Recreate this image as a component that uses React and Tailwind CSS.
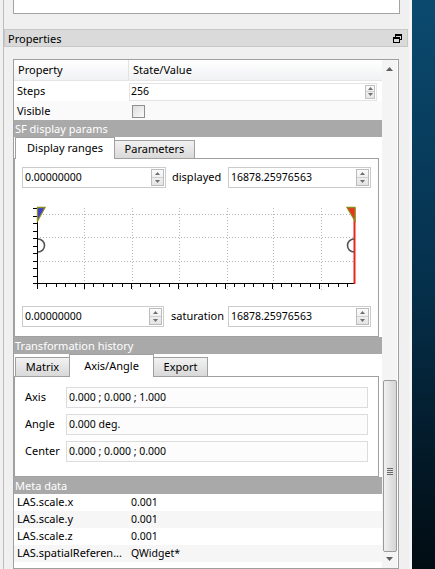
import React from 'react'

function SpinArrows({ small }) {
  return (
    <div className={small ? 'flex h-[14px] w-[10px] shrink-0 flex-col border border-[#c2c2c2] bg-gradient-to-b from-[#fbfbfb] to-[#e4e4e4]' : 'flex h-[17px] w-[13px] shrink-0 flex-col border border-[#bcbcbc] bg-gradient-to-b from-[#fbfbfb] to-[#e4e4e4]'}>
      <div className="flex flex-1 items-center justify-center border-b border-[#cfcfcf]">
        <svg width="5" height="3" viewBox="0 0 5 3">
          <path d="M0 3 L2.5 0 L5 3Z" fill="#6f6f6f" />
        </svg>
      </div>
      <div className="flex flex-1 items-center justify-center">
        <svg width="5" height="3" viewBox="0 0 5 3">
          <path d="M0 0 L2.5 3 L5 0Z" fill="#6f6f6f" />
        </svg>
      </div>
    </div>
  )
}

function SpinBox({ value, className }) {
  return (
    <div className={`flex h-[21px] shrink-0 items-center border border-[#cbcbcb] bg-white pl-[2px] pr-[1px] ${className}`}>
      <span className="flex-1 text-[10.5px] leading-none">{value}</span>
      <SpinArrows />
    </div>
  )
}

function Section({ children }) {
  return (
    <div className="flex h-[17px] items-center bg-[#a9a9a9] pl-[1px] leading-none text-white">{children}</div>
  )
}

function Chart() {
  const gridX = [84, 132, 179, 227, 273, 321]
  const gridY = [215, 238, 262]
  const leftTicks = []
  for (let i = 0; i <= 10; i++) leftTicks.push(209 + i * 7.5)
  const bottomTicks = []
  for (let x = 37; x <= 354; x += 9.4) bottomTicks.push(x)
  return (
    <svg className="block h-[118px] w-[363px]" viewBox="15 189 363 118">
      {gridX.map((x) => (
        <line key={x} x1={x + 0.5} y1={209} x2={x + 0.5} y2={291} stroke="#b4b4b4" strokeDasharray="1 2" />
      ))}
      {gridY.map((y) => (
        <line key={y} x1={37} y1={y + 0.5} x2={354} y2={y + 0.5} stroke="#b4b4b4" strokeDasharray="1 2" />
      ))}
      <line x1={37.5} y1={209} x2={37.5} y2={285} stroke="#000" />
      {leftTicks.map((y) => (
        <line key={y} x1={33} y1={Math.round(y) + 0.5} x2={37} y2={Math.round(y) + 0.5} stroke="#000" />
      ))}
      <line x1={37} y1={284.5} x2={355} y2={284.5} stroke="#000" />
      {bottomTicks.map((x, i) => (
        <line key={i} x1={Math.round(x) + 0.5} y1={284} x2={Math.round(x) + 0.5} y2={i % 5 === 0 ? 290 : 288} stroke="#000" />
      ))}
      <line x1={354.5} y1={209} x2={354.5} y2={285} stroke="#e8261c" strokeWidth="2" />
      <polygon points="37.5,208.5 45,208.5 37.5,222" fill="#3b3bd6" stroke="#8c8c1e" strokeWidth="1.3" />
      <polygon points="347,208.5 355,208.5 355,222" fill="#e8341c" stroke="#8c8c1e" strokeWidth="1.3" />
      <path d="M38 240 A6.5 6.5 0 0 1 38 253" fill="none" stroke="#555" strokeWidth="1.6" />
      <path d="M354 240 A6.5 6.5 0 0 0 354 253" fill="none" stroke="#555" strokeWidth="1.6" />
    </svg>
  )
}

function Field({ label, value }) {
  return (
    <div className="flex h-[21px] items-center">
      <span className="w-[51px] shrink-0 pl-[10px]">{label}</span>
      <div className="flex h-[21px] w-[302px] items-center border border-[#dcdcdc] bg-[#fcfcfc] pl-[2px] text-[10.5px]">{value}</div>
    </div>
  )
}

const meta = [
  ['LAS.scale.x', '0.001'],
  ['LAS.scale.y', '0.001'],
  ['LAS.scale.z', '0.001'],
  ['LAS.spatialReferen...', 'QWidget*'],
]

export default function App() {
  return (
    <div className="flex h-[569px] w-[435px] overflow-hidden bg-[#f0f0f0] font-['Noto_Sans',sans-serif] text-[11px] text-black">
      <div className="ml-[3px] flex w-[406px] shrink-0 flex-col border-l border-[#bdbdbd]">
        <div className="ml-[9px] h-[14px] w-[387px] shrink-0 border-x border-b border-[#a3a3a3] bg-white" />
        <div className="mt-[15px] flex h-[18px] w-[404px] shrink-0 items-center justify-between border border-[#c8c8c8] bg-[#dadada] pl-[3px] pr-[5px] leading-none">
          <span>Properties</span>
          <svg width="9" height="9" viewBox="0 0 9 9">
            <rect x="2.5" y="0.5" width="6" height="5" fill="none" stroke="#000" />
            <rect x="2.5" y="0.5" width="6" height="1.5" fill="#000" />
            <rect x="0.5" y="3.5" width="6" height="5" fill="#dadada" stroke="#000" />
            <rect x="0.5" y="3.5" width="6" height="1.5" fill="#000" />
          </svg>
        </div>
        <div className="ml-[9px] mt-[12px] flex min-h-0 w-[386px] flex-1 border border-[#a0a0a0] bg-white">
          <div className="flex w-[368px] shrink-0 flex-col">
            <div className="flex h-[21px] items-center border-b border-[#e6e6e6] bg-gradient-to-b from-white to-[#f1f2f4]">
              <div className="flex h-full w-[115px] items-center border-r border-[#e2e2e2] pl-[4px]">Property</div>
              <div className="pl-[4px]">State/Value</div>
            </div>
            <div className="flex h-[20px] items-center pt-px">
              <span className="w-[115px] pl-[3px]">Steps</span>
              <div className="flex h-[18px] w-[248px] items-center border border-[#e4e4e4] pl-[1px] pr-[1px]">
                <span className="flex-1 text-[10.5px]">256</span>
                <SpinArrows small />
              </div>
            </div>
            <div className="flex h-[19px] items-center bg-[#fafafa] pt-px">
              <span className="w-[118px] pl-[3px]">Visible</span>
              <div className="h-[13px] w-[13px] border border-[#8e8f8f] bg-gradient-to-br from-[#dcdcdc] to-[#fbfbfb]" />
            </div>
            <Section>SF display params</Section>
            <div className="flex h-[21px] items-end pl-[1px]">
              <div className="relative z-10 -mb-px flex h-[22px] w-[100px] items-center justify-center border-x border-t border-[#a0a0a0] bg-white">Display ranges</div>
              <div className="flex h-[18px] w-[80px] items-center justify-center border-r border-t border-[#a0a0a0] bg-gradient-to-b from-[#f2f2f2] to-[#d9d9d9]">Parameters</div>
            </div>
            <div className="flex w-[365px] flex-col border border-[#a0a0a0] bg-white pb-[9px] pt-[8px]">
              <div className="flex items-center pl-[7px]">
                <SpinBox value="0.00000000" className="w-[144px]" />
                <span className="w-[62px] pl-[6px]">displayed</span>
                <SpinBox value="16878.25976563" className="w-[143px]" />
              </div>
              <Chart />
              <div className="flex items-center pl-[7px]">
                <SpinBox value="0.00000000" className="w-[142px]" />
                <span className="w-[64px] pl-[7px]">saturation</span>
                <SpinBox value="16878.25976563" className="w-[143px]" />
              </div>
            </div>
            <Section>Transformation history</Section>
            <div className="flex h-[22px] items-end pl-[1px]">
              <div className="flex h-[19px] w-[54px] items-center justify-center border-l border-t border-[#a0a0a0] bg-gradient-to-b from-[#f2f2f2] to-[#d9d9d9]">Matrix</div>
              <div className="relative z-10 -mb-px flex h-[23px] w-[85px] items-center justify-center border-x border-t border-[#a0a0a0] bg-white">Axis/Angle</div>
              <div className="flex h-[19px] w-[54px] items-center justify-center border-r border-t border-[#a0a0a0] bg-gradient-to-b from-[#f2f2f2] to-[#d9d9d9]">Export</div>
            </div>
            <div className="flex w-[365px] flex-col gap-[6px] border border-[#a0a0a0] bg-white pb-[14px] pt-[10px]">
              <Field label="Axis" value="0.000 ; 0.000 ; 1.000" />
              <Field label="Angle" value="0.000 deg." />
              <Field label="Center" value="0.000 ; 0.000 ; 0.000" />
            </div>
            <Section>Meta data</Section>
            {meta.map(([k, v], i) => (
              <div key={k} className={i % 2 ? 'flex h-[17px] items-center bg-[#f6f6f6]' : 'flex h-[17px] items-center bg-white'}>
                <span className="w-[117px] pl-[3px]">{k}</span>
                <span className="text-[10.5px]">{v}</span>
              </div>
            ))}
          </div>
          <div className="flex w-[15px] shrink-0 flex-col items-center bg-[#f4f4f4]">
            <div className="flex h-[16px] items-center justify-center pt-[1px]">
              <svg width="7" height="4" viewBox="0 0 7 4">
                <path d="M0 4 L3.5 0 L7 4Z" fill="#5f5f5f" />
              </svg>
            </div>
            <div className="mt-[304px] flex h-[172px] w-[14px] items-center justify-center rounded-[2px] border border-[#9a9a9a] bg-gradient-to-r from-[#f1f1f1] via-[#e2e2e2] to-[#d6d6d6]">
              <svg width="6" height="7" viewBox="0 0 6 7" className="mt-[10px]">
                <path d="M0 0.5H6M0 2.5H6M0 4.5H6M0 6.5H6" stroke="#6a6a6a" />
              </svg>
            </div>
            <div className="flex h-[14px] items-center justify-center">
              <svg width="7" height="4" viewBox="0 0 7 4">
                <path d="M0 0 L3.5 4 L7 0Z" fill="#5f5f5f" />
              </svg>
            </div>
          </div>
        </div>
      </div>
      <div className="w-[3px] shrink-0 bg-[#f5f5f5]" />
      <div className="flex-1 bg-gradient-to-b from-[#0b4a6f] via-[#05304c] to-[#020c13]" />
    </div>
  )
}
